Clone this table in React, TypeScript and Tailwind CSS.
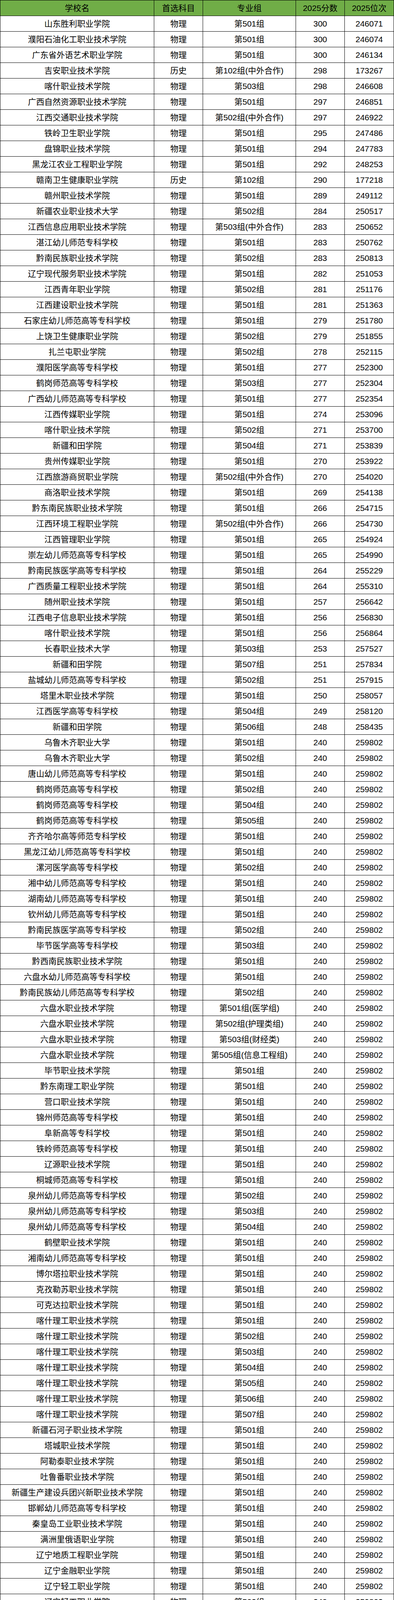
type Row = [string, string, string, string, string]

const top: Row[] = [
  ["山东胜利职业学院", "物理", "第501组", "300", "246071"],
  ["濮阳石油化工职业技术学院", "物理", "第501组", "300", "246074"],
  ["广东省外语艺术职业学院", "物理", "第501组", "300", "246134"],
  ["吉安职业技术学院", "历史", "第102组(中外合作)", "298", "173267"],
  ["喀什职业技术学院", "物理", "第503组", "298", "246608"],
  ["广西自然资源职业技术学院", "物理", "第501组", "297", "246851"],
  ["江西交通职业技术学院", "物理", "第502组(中外合作)", "297", "246922"],
  ["铁岭卫生职业学院", "物理", "第501组", "295", "247486"],
  ["盘锦职业技术学院", "物理", "第501组", "294", "247783"],
  ["黑龙江农业工程职业学院", "物理", "第501组", "292", "248253"],
  ["赣南卫生健康职业学院", "历史", "第102组", "290", "177218"],
  ["赣州职业技术学院", "物理", "第501组", "289", "249112"],
  ["新疆农业职业技术大学", "物理", "第502组", "284", "250517"],
  ["江西信息应用职业技术学院", "物理", "第503组(中外合作)", "283", "250652"],
  ["湛江幼儿师范专科学校", "物理", "第501组", "283", "250762"],
  ["黔南民族职业技术学院", "物理", "第502组", "283", "250813"],
  ["辽宁现代服务职业技术学院", "物理", "第501组", "282", "251053"],
  ["江西青年职业学院", "物理", "第502组", "281", "251176"],
  ["江西建设职业技术学院", "物理", "第501组", "281", "251363"],
  ["石家庄幼儿师范高等专科学校", "物理", "第501组", "279", "251780"],
  ["上饶卫生健康职业学院", "物理", "第502组", "279", "251855"],
  ["扎兰屯职业学院", "物理", "第502组", "278", "252115"],
  ["濮阳医学高等专科学校", "物理", "第501组", "277", "252300"],
  ["鹤岗师范高等专科学校", "物理", "第503组", "277", "252304"],
  ["广西幼儿师范高等专科学校", "物理", "第501组", "277", "252354"],
  ["江西传媒职业学院", "物理", "第501组", "274", "253096"],
  ["喀什职业技术学院", "物理", "第502组", "271", "253700"],
  ["新疆和田学院", "物理", "第504组", "271", "253839"],
  ["贵州传媒职业学院", "物理", "第501组", "270", "253922"],
  ["江西旅游商贸职业学院", "物理", "第502组(中外合作)", "270", "254020"],
  ["商洛职业技术学院", "物理", "第501组", "269", "254138"],
  ["黔东南民族职业技术学院", "物理", "第501组", "266", "254715"],
  ["江西环境工程职业学院", "物理", "第502组(中外合作)", "266", "254730"],
  ["江西管理职业学院", "物理", "第501组", "265", "254924"],
  ["崇左幼儿师范高等专科学校", "物理", "第501组", "265", "254990"],
  ["黔南民族医学高等专科学校", "物理", "第501组", "264", "255229"],
  ["广西质量工程职业技术学院", "物理", "第501组", "264", "255310"],
  ["随州职业技术学院", "物理", "第501组", "257", "256642"],
  ["江西电子信息职业技术学院", "物理", "第501组", "256", "256830"],
  ["喀什职业技术学院", "物理", "第501组", "256", "256864"],
  ["长春职业技术大学", "物理", "第503组", "253", "257527"],
  ["新疆和田学院", "物理", "第507组", "251", "257834"],
  ["盐城幼儿师范高等专科学校", "物理", "第502组", "251", "257915"],
  ["塔里木职业技术学院", "物理", "第501组", "250", "258057"],
  ["江西医学高等专科学校", "物理", "第504组", "249", "258120"],
  ["新疆和田学院", "物理", "第506组", "248", "258435"],
]

// every school below sits on the 240 line, rank 259802
const floor: [string, string][] = [
  ["乌鲁木齐职业大学", "第501组"],
  ["乌鲁木齐职业大学", "第502组"],
  ["唐山幼儿师范高等专科学校", "第501组"],
  ["鹤岗师范高等专科学校", "第502组"],
  ["鹤岗师范高等专科学校", "第504组"],
  ["鹤岗师范高等专科学校", "第505组"],
  ["齐齐哈尔高等师范专科学校", "第501组"],
  ["黑龙江幼儿师范高等专科学校", "第501组"],
  ["漯河医学高等专科学校", "第502组"],
  ["湘中幼儿师范高等专科学校", "第501组"],
  ["湖南幼儿师范高等专科学校", "第501组"],
  ["钦州幼儿师范高等专科学校", "第501组"],
  ["黔南民族医学高等专科学校", "第502组"],
  ["毕节医学高等专科学校", "第503组"],
  ["黔西南民族职业技术学院", "第501组"],
  ["六盘水幼儿师范高等专科学校", "第501组"],
  ["黔南民族幼儿师范高等专科学校", "第502组"],
  ["六盘水职业技术学院", "第501组(医学组)"],
  ["六盘水职业技术学院", "第502组(护理类组)"],
  ["六盘水职业技术学院", "第503组(财经类)"],
  ["六盘水职业技术学院", "第505组(信息工程组)"],
  ["毕节职业技术学院", "第501组"],
  ["黔东南理工职业学院", "第501组"],
  ["营口职业技术学院", "第501组"],
  ["锦州师范高等专科学校", "第501组"],
  ["阜新高等专科学校", "第501组"],
  ["铁岭师范高等专科学校", "第501组"],
  ["辽源职业技术学院", "第501组"],
  ["桐城师范高等专科学校", "第501组"],
  ["泉州幼儿师范高等专科学校", "第502组"],
  ["泉州幼儿师范高等专科学校", "第503组"],
  ["泉州幼儿师范高等专科学校", "第504组"],
  ["鹤壁职业技术学院", "第501组"],
  ["湘南幼儿师范高等专科学校", "第501组"],
  ["博尔塔拉职业技术学院", "第501组"],
  ["克孜勒苏职业技术学院", "第501组"],
  ["可克达拉职业技术学院", "第501组"],
  ["喀什理工职业技术学院", "第501组"],
  ["喀什理工职业技术学院", "第502组"],
  ["喀什理工职业技术学院", "第503组"],
  ["喀什理工职业技术学院", "第504组"],
  ["喀什理工职业技术学院", "第505组"],
  ["喀什理工职业技术学院", "第506组"],
  ["喀什理工职业技术学院", "第507组"],
  ["新疆石河子职业技术学院", "第501组"],
  ["塔城职业技术学院", "第501组"],
  ["阿勒泰职业技术学院", "第501组"],
  ["吐鲁番职业技术学院", "第501组"],
  ["新疆生产建设兵团兴新职业技术学院", "第501组"],
  ["邯郸幼儿师范高等专科学校", "第501组"],
  ["秦皇岛工业职业技术学院", "第501组"],
  ["满洲里俄语职业学院", "第501组"],
  ["辽宁地质工程职业学院", "第501组"],
  ["辽宁金融职业学院", "第501组"],
  ["辽宁轻工职业学院", "第501组"],
  ["辽宁轻工职业学院", "第502组"],
  ["辽宁轻工职业学院", "第503组"],
  ["辽宁生态工程职业学院", "第501组"],
  ["辽宁建筑职业学院", "第501组"],
  ["吉林通用航空职业技术学院", "第501组"],
  ["黑龙江生态工程职业学院", "第501组"],
  ["黑龙江旅游职业技术学院", "第501组"],
  ["黑龙江农业经济职业学院", "第501组"],
  ["淮南职业技术学院", "第501组"],
  ["马鞍山师范高等专科学校", "第501组"],
  ["黎明职业大学", "第502组(中外合作)"],
  ["山东轻工职业学院", "第501组"],
  ["山东商务职业学院", "第501组"],
  ["枣庄科技职业学院", "第501组"],
  ["山东旅游职业学院", "第501组"],
  ["永州师范高等专科学校", "第501组"],
  ["广西物流职业技术学院", "第501组"],
  ["梧州职业学院", "第501组"],
  ["广西职业技术学院", "第501组"],
  ["贵州电子信息职业技术学院", "第502组"],
  ["云南林业职业技术学院", "第502组(农林类组)"],
  ["西藏职业技术学院", "第501组"],
  ["西藏职业技术学院", "第502组"],
  ["阿克苏职业技术学院", "第501组"],
  ["河北旅游职业学院", "第501组"],
  ["黑龙江林业职业技术学院", "第501组"],
  ["广西金融职业技术学院", "第502组"],
  ["广西国际商务职业技术学院", "第501组"],
  ["海南职业技术学院", "第501组"],
  ["宝鸡职业技术学院", "第501组"],
  ["铁门关职业技术学院", "第501组"],
  ["图木舒克职业技术学院", "第501组"],
  ["和田职业技术学院", "第502组"],
  ["伊犁职业技术学院", "第501组"],
  ["新疆应用职业技术学院", "第501组"],
  ["新疆应用职业技术学院", "第502组"],
  ["新疆应用职业技术学院", "第503组"],
  ["新疆应用职业技术学院", "第504组"],
  ["辽阳职业技术学院", "第501组"],
  ["大兴安岭职业学院", "第501组"],
  ["黑龙江护理高等专科学校", "第501组"],
  ["石家庄幼儿师范高等专科学校", "第502组"],
  ["郑州幼儿师范高等专科学校", "第501组"],
  ["辽宁民族师范高等专科学校", "第501组"],
  ["辽宁民族师范高等专科学校", "第502组"],
  ["辽宁民族师范高等专科学校", "第503组"],
  ["哈尔滨幼儿师范高等专科学校", "第501组"],
  ["抚州医药学院", "第513组"],
  ["江西医学高等专科学校", "第505组"],
  ["江西医学高等专科学校", "第506组(中外合作)"],
  ["江西师范高等专科学校", "第503组(中外合作)"],
  ["江西师范高等专科学校", "第504组(中外合作)"],
  ["宜春幼儿师范高等专科学校", "第501组"],
  ["上饶幼儿师范高等专科学校", "第501组"],
  ["上饶幼儿师范高等专科学校", "第502组(中外合作)"],
  ["抚州幼儿师范高等专科学校", "第501组"],
  ["江西机电职业技术学院", "第502组(中外合作)"],
  ["江西外语外贸职业学院", "第501组"],
  ["江西工程职业学院", "第501组"],
  ["江西陶瓷工艺美术职业技术学院", "第501组"],
  ["江西应用工程职业学院", "第501组"],
  ["江西农业工程职业学院", "第501组"],
  ["上饶职业技术学院", "第501组"],
  ["上饶职业技术学院", "第502组"],
  ["抚州职业技术学院", "第501组"],
  ["抚州职业技术学院", "第502组(中外合作)"],
  ["江西电子信息职业技术学院", "第502组"],
  ["江西冶金职业技术学院", "第501组"],
  ["萍乡卫生职业学院", "第501组"],
  ["江西婺源茶业职业学院", "第501组"],
  ["新余职业技术学院", "第501组"],
  ["吉安幼儿师范高等专科学校", "第501组"],
  ["吉安职业技术学院", "第501组"],
  ["吉安职业技术学院", "第502组(中外合作)"],
  ["赣南卫生健康职业学院", "第501组"],
  ["赣南卫生健康职业学院", "第502组"],
  ["赣南卫生健康职业学院", "第503组"],
  ["赣南卫生健康职业学院", "第504组"],
  ["赣南卫生健康职业学院", "第505组"],
  ["上饶卫生健康职业学院", "第501组"],
  ["上饶卫生健康职业学院", "第503组"],
  ["九江卫生健康职业学院", "第501组"],
  ["江西管理职业学院", "第502组"],
  ["江西管理职业学院", "第503组"],
]

const rows: Row[] = [
  ...top,
  ...floor.map(([name, group]): Row => [name, "物理", group, "240", "259802"]),
]

const headers = ["学校名", "首选科目", "专业组", "2025分数", "2025位次"]

const grid = "grid grid-cols-[394px_125px_238px_125px_126px]"
const cell =
  "flex items-center justify-center overflow-hidden border-r border-b border-black whitespace-nowrap"

export default function App() {
  return (
    <div
      className="w-[1009px] overflow-hidden bg-white text-[21px] leading-[28px] text-black"
      style={{ fontFamily: '"Liberation Sans", "Noto Sans CJK SC", sans-serif' }}
    >
      <div className="border-l border-black">
        <div className={`${grid} h-[41px] border-t border-black bg-[#70ad47]`}>
          {headers.map((h) => (
            <div key={h} className={cell}>
              {h}
            </div>
          ))}
        </div>

        {rows.map((r, i) => (
          <div key={i} className={`${grid} h-[40px]`}>
            {r.map((v, j) => (
              <div key={j} className={cell}>
                {v}
              </div>
            ))}
          </div>
        ))}
      </div>
    </div>
  )
}
